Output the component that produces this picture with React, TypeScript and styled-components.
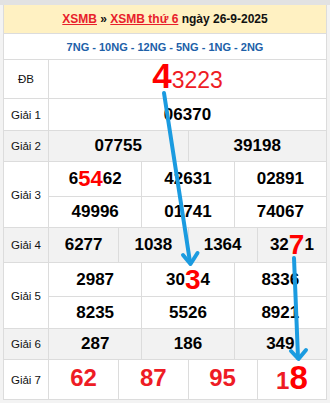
import React from "react";
import styled, { createGlobalStyle } from "styled-components";

interface Prize {
  label: string;
  cols: number;
  heights: number[];
  grey?: boolean;
  values: React.ReactNode[];
}

const GlobalStyle = createGlobalStyle`
  body {
    margin: 0;
    background: #f3f3f3;
    font-family: "Liberation Sans", Arial, sans-serif;
  }
`;

const Hot = styled.span<{ size: number }>`
  color: #ff0000;
  font-size: ${(p) => p.size}px;
  line-height: 0;
`;

const prizes: Prize[] = [
  { label: "Giải 1", cols: 1, heights: [31], values: ["06370"] },
  { label: "Giải 2", cols: 2, heights: [30], grey: true, values: ["07755", "39198"] },
  {
    label: "Giải 3",
    cols: 3,
    heights: [34, 30],
    values: [
      <>
        6<Hot size={22}>54</Hot>62
      </>,
      "42631",
      "02891",
      "49996",
      "01741",
      "74067",
    ],
  },
  {
    label: "Giải 4",
    cols: 4,
    heights: [34],
    grey: true,
    values: [
      "6277",
      "1038",
      "1364",
      <>
        32<Hot size={28}>7</Hot>1
      </>,
    ],
  },
  {
    label: "Giải 5",
    cols: 3,
    heights: [33, 31],
    values: [
      "2987",
      <>
        30<Hot size={28}>3</Hot>4
      </>,
      "8336",
      "8235",
      "5526",
      "8921",
    ],
  },
  { label: "Giải 6", cols: 3, heights: [30], grey: true, values: ["287", "186", "349"] },
];

const giai7 = ["62", "87", "95"];

export default function App() {
  return (
    <>
      <GlobalStyle />
      <Page>
        <TopStrip />
        <Table>
          <Header>
            <HeadLink>XSMB</HeadLink> » <HeadLink>XSMB thứ 6</HeadLink> ngày 26-9-2025
          </Header>
          <Nav>7NG - 10NG - 12NG - 5NG - 1NG - 2NG</Nav>

          <Row>
            <Label>ĐB</Label>
            <Special>
              <BigFour>4</BigFour>3223
            </Special>
          </Row>

          {prizes.map((p) => (
            <Row key={p.label} grey={p.grey}>
              <Label>{p.label}</Label>
              <Cells cols={p.cols}>
                {p.values.map((v, i) => (
                  <Cell
                    key={i}
                    h={p.heights[Math.floor(i / p.cols)]}
                    first={i % p.cols === 0}
                    top={i < p.cols}
                  >
                    {v}
                  </Cell>
                ))}
              </Cells>
            </Row>
          ))}

          <Row>
            <Label>Giải 7</Label>
            <Cells cols={4}>
              {giai7.map((v, i) => (
                <RedCell key={v} h={39} first={i === 0} top>
                  {v}
                </RedCell>
              ))}
              <RedCell h={39} top>
                1<BigEight>8</BigEight>
              </RedCell>
            </Cells>
          </Row>
        </Table>

        <Arrows width="330" height="403" viewBox="0 0 330 403">
          <g stroke="#1b9be0" strokeWidth="4" fill="none" strokeLinecap="round">
            <line x1="164" y1="93" x2="190" y2="262" />
            <polyline points="183,255 190.5,264 197.5,253" strokeLinejoin="round" />
            <line x1="294" y1="258" x2="298" y2="358" />
            <polyline points="291,351 298.5,359 306,350" strokeLinejoin="round" />
          </g>
        </Arrows>
      </Page>
    </>
  );
}

const Page = styled.div`
  position: relative;
  width: 330px;
  height: 403px;
  overflow: hidden;
`;

const TopStrip = styled.div`
  height: 5px;
  background: #e2e2e2;
`;

const Table = styled.div`
  margin: 0 3px;
  border-left: 1px solid #dcdcdc;
  border-right: 1px solid #dcdcdc;
  background: #fff;
`;

const Header = styled.div`
  height: 28px;
  line-height: 28px;
  text-align: center;
  background: #fff1c2;
  border-bottom: 1px solid #dcdcdc;
  font-size: 12px;
  font-weight: bold;
  color: #111;
`;

const HeadLink = styled.a`
  color: #e8202a;
  text-decoration: underline;
`;

const Nav = styled.div`
  height: 25px;
  display: flex;
  align-items: center;
  justify-content: center;
  border-bottom: 1px solid #dcdcdc;
  font-size: 11px;
  font-weight: bold;
  color: #2060a8;
`;

const Row = styled.div<{ grey?: boolean }>`
  display: grid;
  grid-template-columns: 45px 1fr;
  border-bottom: 1px solid #dcdcdc;
  background: ${(p) => (p.grey ? "#f2f2f2" : "#fff")};
`;

const Label = styled.div`
  display: flex;
  align-items: center;
  justify-content: center;
  border-right: 1px solid #dcdcdc;
  font-size: 11.5px;
  color: #111;
`;

const Special = styled.div`
  height: 38px;
  display: flex;
  align-items: baseline;
  justify-content: center;
  line-height: 32px;
  color: #ee1c25;
  font-size: 23px;
`;

const BigFour = styled.span`
  color: #ff0000;
  font-size: 35px;
  font-weight: bold;
`;

const Cells = styled.div<{ cols: number }>`
  display: grid;
  grid-template-columns: repeat(${(p) => p.cols}, 1fr);
`;

const Cell = styled.div<{ h: number; first?: boolean; top?: boolean }>`
  height: ${(p) => p.h}px;
  display: flex;
  align-items: center;
  justify-content: center;
  border-left: ${(p) => (p.first ? "none" : "1px solid #dcdcdc")};
  border-top: ${(p) => (p.top ? "none" : "1px solid #dcdcdc")};
  font-size: 17px;
  font-weight: bold;
  color: #000;
  line-height: 20px;
`;

const RedCell = styled(Cell)`
  color: #ee1c25;
  font-size: 24px;
  align-items: baseline;
  line-height: 36px;
`;

const BigEight = styled.span`
  color: #ff0000;
  font-size: 33px;
`;

const Arrows = styled.svg`
  position: absolute;
  top: 0;
  left: 0;
  pointer-events: none;
`;
